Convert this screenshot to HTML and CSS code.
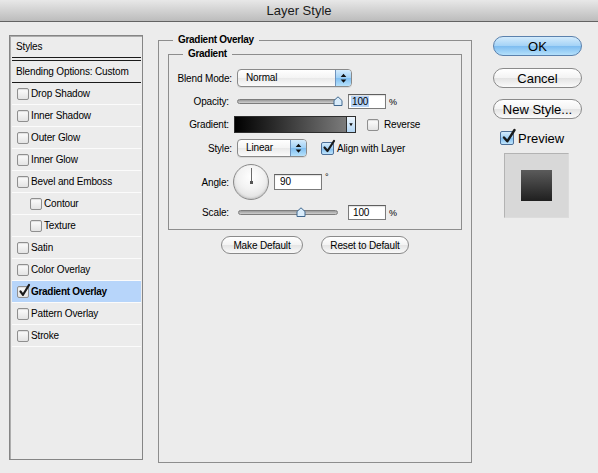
FILE: index.html
```html
<!DOCTYPE html>
<html lang="en">
<head>
<meta charset="utf-8">
<title>Layer Style</title>
<link rel="stylesheet" href="styles.css">
</head>
<body>
<div class="titlebar">Layer Style</div>
<div class="main">
  <div class="styles-list">
    <div class="row head">Styles</div>
    <div class="row blend">Blending Options: Custom</div>
    <div class="row"><span class="cb"></span>Drop Shadow</div>
    <div class="row"><span class="cb"></span>Inner Shadow</div>
    <div class="row"><span class="cb"></span>Outer Glow</div>
    <div class="row"><span class="cb"></span>Inner Glow</div>
    <div class="row"><span class="cb"></span>Bevel and Emboss</div>
    <div class="row sub"><span class="cb"></span>Contour</div>
    <div class="row sub"><span class="cb"></span>Texture</div>
    <div class="row"><span class="cb"></span>Satin</div>
    <div class="row"><span class="cb"></span>Color Overlay</div>
    <div class="row selected"><span class="cb"><svg class="check" width="13" height="15" viewBox="0 0 13 15"><path d="M2.5 8.5 L5 11.8 L11 2" fill="none" stroke="#1a1a1a" stroke-width="2.2" stroke-linecap="round" stroke-linejoin="round"/></svg></span><b>Gradient Overlay</b></div>
    <div class="row"><span class="cb"></span>Pattern Overlay</div>
    <div class="row"><span class="cb"></span>Stroke</div>
  </div>

  <fieldset class="group outer">
    <legend>Gradient Overlay</legend>
    <fieldset class="group inner">
      <legend>Gradient</legend>
      <div class="frow r-blend">
        <span class="lbl pop">Blend Mode:</span>
        <div class="popup blend-pop"><span class="pop-text">Normal</span><span class="pop-arrows"><svg width="16" height="16" viewBox="0 0 16 16"><path d="M5 7 L8 3.5 L11 7 Z M5 9.5 L8 13 L11 9.5 Z" fill="#111"/></svg></span></div>
      </div>
      <div class="frow r-opacity">
        <span class="lbl">Opacity:</span>
        <div class="slider op-slider"><div class="track"></div><svg class="thumb" style="left:96px" width="10" height="10" viewBox="0 0 10 10"><path d="M1 9.5 V4.5 L5 0.8 L9 4.5 V9.5 Z" fill="#d9ecfb" stroke="#41688f" stroke-width="1"/></svg></div>
        <div class="num op-num"><span class="sel">100</span></div>
        <span class="unit">%</span>
      </div>
      <div class="frow r-gradient">
        <span class="lbl">Gradient:</span>
        <div class="gradbar"><div class="gfill"></div><div class="gbtn"><svg width="9" height="15" viewBox="0 0 9 15"><path d="M2.5 6 L6.5 6 L4.5 9.5 Z" fill="#111"/></svg></div></div>
        <span class="cb rev-cb"></span><span class="opt">Reverse</span>
      </div>
      <div class="frow r-style">
        <span class="lbl pop">Style:</span>
        <div class="popup style-pop"><span class="pop-text">Linear</span><span class="pop-arrows"><svg width="16" height="16" viewBox="0 0 16 16"><path d="M5 7 L8 3.5 L11 7 Z M5 9.5 L8 13 L11 9.5 Z" fill="#111"/></svg></span></div>
        <span class="acb align-cb"><svg class="check" width="14" height="15" viewBox="0 0 14 15"><path d="M2.5 8.5 L5.5 12 L12 2" fill="none" stroke="#1a1a1a" stroke-width="2.2" stroke-linecap="round" stroke-linejoin="round"/></svg></span><span class="opt align-txt">Align with Layer</span>
      </div>
      <div class="frow r-angle">
        <span class="lbl">Angle:</span>
        <div class="dial"><div class="needle"></div><div class="hub"></div></div>
        <div class="num angle-num">90</div>
        <span class="deg">°</span>
      </div>
      <div class="frow r-scale">
        <span class="lbl">Scale:</span>
        <div class="slider sc-slider"><div class="track"></div><svg class="thumb" style="left:58px" width="10" height="10" viewBox="0 0 10 10"><path d="M1 9.5 V4.5 L5 0.8 L9 4.5 V9.5 Z" fill="#d9ecfb" stroke="#41688f" stroke-width="1"/></svg></div>
        <div class="num sc-num">100</div>
        <span class="unit">%</span>
      </div>
    </fieldset>
    <div class="defaults">
      <button class="sbtn make">Make Default</button>
      <button class="sbtn reset">Reset to Default</button>
    </div>
  </fieldset>

  <div class="actions">
    <button class="btn ok">OK</button>
    <button class="btn cancel">Cancel</button>
    <button class="btn newstyle">New Style...</button>
    <div class="preview-toggle"><span class="acb prev-cb"><svg class="check" width="16" height="17" viewBox="0 0 16 17"><path d="M3 9.5 L6.3 13.3 L13.5 2" fill="none" stroke="#1a1a1a" stroke-width="2.4" stroke-linecap="round" stroke-linejoin="round"/></svg></span><span class="prev-txt">Preview</span></div>
    <div class="preview-box"><div class="preview-square"></div></div>
  </div>
</div>
</body>
</html>
```

FILE: styles.css
```css
* { box-sizing: border-box; }
html, body { margin: 0; padding: 0; }
body {
  width: 598px;
  height: 473px;
  overflow: hidden;
  background: #ececec;
  font-family: "Liberation Sans", Arial, sans-serif;
  font-size: 10px;
  letter-spacing: -0.15px;
  color: #000;
}

.titlebar {
  height: 22px;
  line-height: 21px;
  text-align: center;
  font-size: 13px;
  letter-spacing: 0;
  color: #1a1a1a;
  background: linear-gradient(#e8e8e8, #bcbcbc);
  border-bottom: 1px solid #636363;
}

.main {
  display: flex;
  align-items: flex-start;
  padding: 13px 0 0 9px;
}

/* ---------- left styles list ---------- */
.styles-list {
  width: 134px;
  height: 425px;
  flex: none;
  border: 1px solid #858585;
  box-shadow: inset 1px 1px 0 #adadad;
  padding: 0 1px 0 2px;
  display: flex;
  flex-direction: column;
}
.row {
  height: 22px;
  flex: none;
  display: flex;
  align-items: center;
  padding-left: 5px;
  border-bottom: 1px solid #fbfbfb;
}
.row.head {
  padding-left: 4px;
  border-bottom: 1px solid #1a1a1a;
  margin-bottom: 2px;
}
.row.blend {
  height: 23px;
  padding-left: 4px;
  border-top: 1px solid #1a1a1a;
  border-bottom: 1px solid #1a1a1a;
}
.row.sub { padding-left: 18px; }
.row.selected { background: #b7d5fa; }
.row b { font-weight: bold; letter-spacing: -0.3px; }

.cb {
  position: relative;
  flex: none;
  width: 12px;
  height: 12px;
  margin-right: 2px;
  border: 1px solid #8f8f8f;
  border-radius: 2px;
  background: linear-gradient(#fdfdfd, #e3e3e3);
  box-shadow: inset 0 1px 1px rgba(0,0,0,0.12);
}
.check {
  position: absolute;
  left: 0;
  top: -4px;
}

/* ---------- group boxes ---------- */
.group {
  margin: 0;
  min-width: 0;
  border: 1px solid #8d8d8d;
}
.group > legend {
  font-weight: bold;
  letter-spacing: -0.3px;
  line-height: 10px;
  padding: 0 5px;
  color: #000;
}
.outer {
  width: 314px;
  height: 428px;
  flex: none;
  margin-left: 15px;
  padding: 4px 9px 0 9px;
}
.outer > legend { margin-left: 5px; }
.inner {
  padding: 10px 0 9px 0;
}
.inner > legend { margin-left: 14px; }

.frow {
  display: flex;
  align-items: center;
}
.lbl {
  flex: none;
  width: 64px;
  text-align: right;
  padding-right: 4px;
}
.lbl.pop { padding-right: 1px; }

.r-blend { height: 18px; }
.r-opacity { height: 15px; margin-top: 7px; }
.r-gradient { height: 17px; margin-top: 7px; }
.r-style { height: 18px; margin-top: 6px; }
.r-angle { height: 36px; margin-top: 7px; }
.r-scale { height: 15px; margin-top: 5px; }

/* popup menus */
.popup {
  flex: none;
  height: 18px;
  display: flex;
  border: 1px solid #8a8a8a;
  border-radius: 4px;
  overflow: hidden;
  background: linear-gradient(#ffffff, #f4f4f4 50%, #e9e9e9 51%, #fbfbfb);
  box-shadow: 0 1px 0 rgba(0,0,0,0.08);
}
.pop-text {
  flex: 1;
  padding-left: 8px;
  line-height: 16px;
}
.pop-arrows {
  flex: none;
  width: 16px;
  display: flex;
  align-items: center;
  justify-content: center;
  border-left: 1px solid #6f93bd;
  background: linear-gradient(#d4ebfc, #9fd0f6 50%, #7fbef1 51%, #b6e1fb);
}
.blend-pop { width: 115px; margin-left: 4px; }
.style-pop { width: 70px; margin-left: 4px; }

/* sliders */
.slider {
  position: relative;
  flex: none;
  height: 10px;
  display: flex;
  align-items: center;
}
.op-slider { width: 104px; margin-left: 4px; }
.sc-slider { width: 100px; margin-left: 5px; }
.track {
  width: 100%;
  height: 5px;
  border-radius: 3px;
  border: 1px solid #7d7d7d;
  background: linear-gradient(#9a9a9a, #cfcfcf);
}
.thumb {
  position: absolute;
  top: -1px;
}

/* number fields */
.num {
  flex: none;
  height: 15px;
  line-height: 13px;
  padding-left: 2px;
  background: #fff;
  border: 1px solid #7b7b7b;
  border-top-color: #5f5f5f;
  box-shadow: inset 0 1px 1px rgba(0,0,0,0.12);
}
.op-num { width: 38px; margin-left: 7px; }
.sc-num { width: 38px; margin-left: 10px; padding-left: 4px; }
.angle-num { width: 48px; height: 16px; line-height: 14px; margin-left: 5px; padding-left: 5px; }
.sel { background: #b5d3f7; padding: 0 1px; }
.unit { margin-left: 3px; font-size: 9px; }
.deg {
  align-self: flex-start;
  margin-top: 8px;
  margin-left: 3px;
  font-size: 9px;
}

/* gradient bar */
.gradbar {
  flex: none;
  width: 122px;
  height: 17px;
  margin-left: 1px;
  display: flex;
  border: 1px solid #2e2e2e;
}
.gfill {
  flex: 1;
  background: linear-gradient(to right, #000 0%, #2a2a2a 35%, #7b7b7b 100%);
}
.gbtn {
  flex: none;
  width: 9px;
  border-left: 1px solid #2e2e2e;
  background: linear-gradient(#eef6fd, #b3d6f4);
  display: flex;
  align-items: center;
  justify-content: center;
}
.rev-cb { margin-left: 11px; margin-right: 0; }
.opt { margin-left: 5px; }

/* aqua checkbox */
.acb {
  position: relative;
  flex: none;
  width: 13px;
  height: 13px;
  border: 1px solid #4d6f98;
  border-radius: 2px;
  background: linear-gradient(#d4ebfc, #9fd0f6 50%, #7fbef1 51%, #c0e4fb);
}
.align-cb { margin-left: 14px; }
.align-txt { margin-left: 3px; }

/* dial */
.dial {
  position: relative;
  flex: none;
  width: 36px;
  height: 36px;
  border-radius: 50%;
  border: 1px solid #8a8a8a;
  background: radial-gradient(circle at 50% 35%, #ffffff 0%, #f2f2f2 45%, #d6d6d6 100%);
  box-shadow: inset 0 -1px 2px rgba(0,0,0,0.15);
}
.needle {
  position: absolute;
  left: 16.5px;
  top: 3px;
  width: 1px;
  height: 15px;
  background: #6a6a6a;
}
.hub {
  position: absolute;
  left: 15.5px;
  top: 16px;
  width: 3px;
  height: 3px;
  background: #555;
}

/* default buttons */
.defaults {
  display: flex;
  justify-content: center;
  gap: 18px;
  margin-top: 6px;
}
.sbtn {
  height: 18px;
  padding: 0;
  font-family: inherit;
  font-size: 10px;
  letter-spacing: -0.15px;
  color: #000;
  border: 1px solid #8a8a8a;
  border-radius: 9px;
  background: linear-gradient(#ffffff, #f3f3f3 50%, #e4e4e4 51%, #f9f9f9);
}
.make { width: 82px; }
.reset { width: 88px; }

/* right column */
.actions {
  flex: none;
  width: 89px;
  margin-left: 21px;
  margin-top: 1px;
  display: flex;
  flex-direction: column;
}
.btn {
  height: 20px;
  padding: 0;
  font-family: inherit;
  font-size: 13px;
  letter-spacing: 0;
  color: #000;
  border: 1px solid #8a8a8a;
  border-radius: 10px;
  background: linear-gradient(#ffffff, #f3f3f3 50%, #e3e3e3 51%, #fafafa);
}
.btn.ok {
  border-color: #5b81ad;
  background: linear-gradient(#d3ebfc, #a3d2f6 50%, #7dbcf0 51%, #b4e0fb);
}
.cancel { margin-top: 12px; }
.newstyle { margin-top: 11px; }

.preview-toggle {
  display: flex;
  align-items: center;
  margin-top: 12px;
  margin-left: 7px;
  height: 14px;
}
.prev-cb { width: 14px; height: 14px; }
.prev-cb .check { top: -4px; left: 0; }
.prev-txt {
  margin-left: 4px;
  font-size: 13px;
  letter-spacing: 0;
}
.preview-box {
  width: 65px;
  height: 65px;
  margin-top: 8px;
  margin-left: 11px;
  border: 1px solid #b3b3b3;
  border-right-color: #dcdcdc;
  border-bottom-color: #dcdcdc;
  background: #d8d8d8;
  display: flex;
  align-items: center;
  justify-content: center;
}
.preview-square {
  width: 31px;
  height: 31px;
  background: linear-gradient(#5b5b5b, #1f1f1f);
}
```
